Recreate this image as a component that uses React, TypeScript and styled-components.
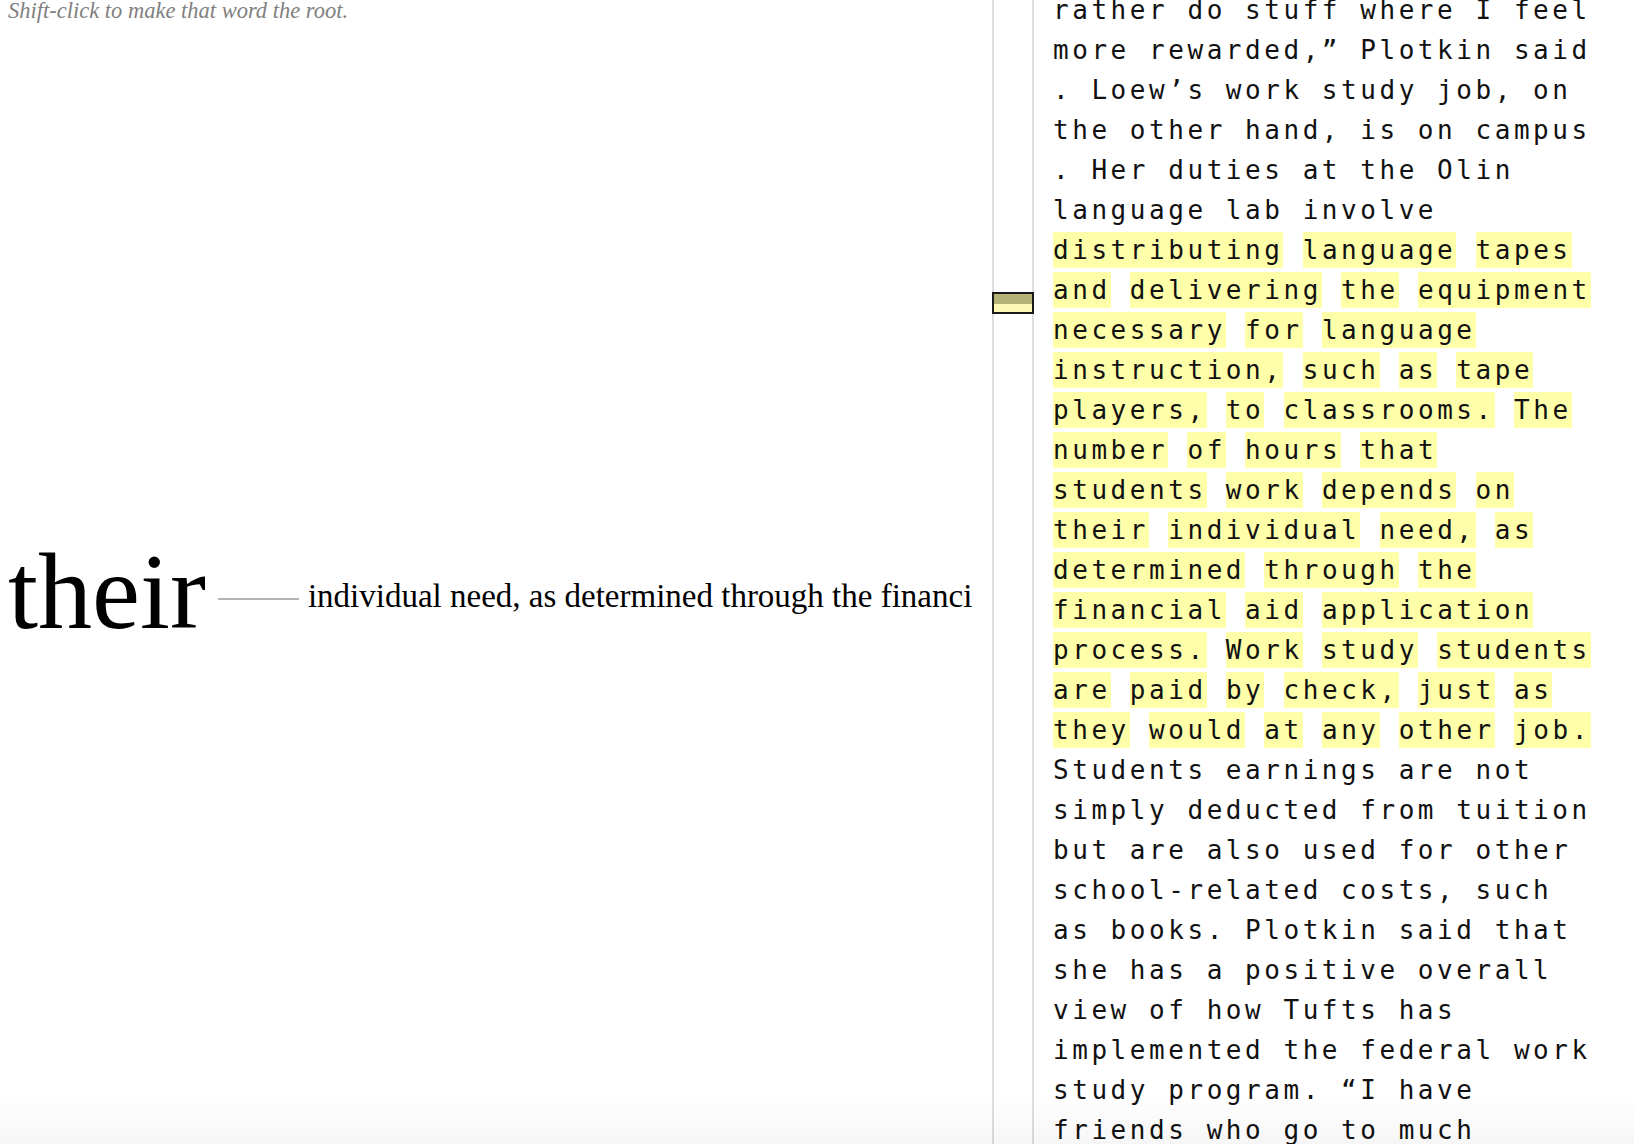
import React from "react";
import styled, { createGlobalStyle } from "styled-components";

const GlobalStyle = createGlobalStyle`
  html, body { margin: 0; padding: 0; background: #ffffff; overflow: hidden; }
  * { box-sizing: border-box; }
`;

const Page = styled.div`
  display: flex;
  height: 100vh;
  width: 100vw;
  overflow: hidden;
`;

const TreePane = styled.section`
  width: 994px;
  flex-shrink: 0;
  display: flex;
  flex-direction: column;
  border-right: 2px solid #dedede;
  padding-left: 8px;
`;

const Hint = styled.p`
  margin: -2px 0 0 0;
  font-family: "Liberation Serif", "Times New Roman", serif;
  font-style: italic;
  font-size: 22.5px;
  line-height: 26px;
  color: #808080;
`;

const TreeArea = styled.div`
  flex: 1;
  display: flex;
  align-items: center;
  padding-top: 15px;
  margin-right: 19px;
  overflow: hidden;
`;

const Branch = styled.div`
  display: flex;
  align-items: center;
  white-space: nowrap;
`;

const RootWord = styled.span`
  font-family: "Liberation Serif", "Times New Roman", serif;
  font-size: 108px;
  line-height: 1;
  color: #000;
  flex-shrink: 0;
`;

const Connector = styled.span`
  width: 81px;
  height: 2px;
  margin: 15px 0 0 12px;
  background: #b3b3b3;
  flex-shrink: 0;
`;

const ChildText = styled.span`
  font-family: "Liberation Serif", "Times New Roman", serif;
  font-size: 33px;
  line-height: 1;
  color: #000;
  margin: 9px 0 0 9px;
  flex-shrink: 0;
`;

const Minimap = styled.aside`
  position: relative;
  width: 40px;
  flex-shrink: 0;
  border-right: 2px solid #dedede;
`;

const ViewportBox = styled.div`
  position: absolute;
  top: 292px;
  left: -2px;
  width: 42px;
  height: 22px;
  border: 2px solid #1a1a1a;
  background: linear-gradient(#b5b278 0, #b5b278 55%, #faf8b4 55%, #faf8b4 100%);
`;

const TextPane = styled.article`
  flex: 1;
  padding-left: 19px;
  overflow: hidden;
`;

const TextBody = styled.div`
  margin-top: -10px;
  font-family: "DejaVu Sans Mono", "Liberation Mono", monospace;
  font-size: 26px;
  letter-spacing: 3.55px;
  line-height: 40px;
  color: #111;
  white-space: pre;
`;

const Line = styled.div`
  height: 40px;
`;

const Mark = styled.span`
  background: #ffffaa;
  padding: 3px 0 3px;
`;

const BottomFade = styled.div`
  position: fixed;
  left: 0;
  right: 0;
  bottom: 0;
  height: 48px;
  pointer-events: none;
  background: linear-gradient(rgba(0, 0, 0, 0), rgba(0, 0, 0, 0.035));
`;

type TextLine = { text: string; hl?: boolean };

const lines: TextLine[] = [
  { text: "rather do stuff where I feel" },
  { text: "more rewarded,\u201d Plotkin said" },
  { text: ". Loew\u2019s work study job, on" },
  { text: "the other hand, is on campus" },
  { text: ". Her duties at the Olin" },
  { text: "language lab involve" },
  { text: "distributing language tapes", hl: true },
  { text: "and delivering the equipment", hl: true },
  { text: "necessary for language", hl: true },
  { text: "instruction, such as tape", hl: true },
  { text: "players, to classrooms. The", hl: true },
  { text: "number of hours that", hl: true },
  { text: "students work depends on", hl: true },
  { text: "their individual need, as", hl: true },
  { text: "determined through the", hl: true },
  { text: "financial aid application", hl: true },
  { text: "process. Work study students", hl: true },
  { text: "are paid by check, just as", hl: true },
  { text: "they would at any other job.", hl: true },
  { text: "Students earnings are not" },
  { text: "simply deducted from tuition" },
  { text: "but are also used for other" },
  { text: "school-related costs, such" },
  { text: "as books. Plotkin said that" },
  { text: "she has a positive overall" },
  { text: "view of how Tufts has" },
  { text: "implemented the federal work" },
  { text: "study program. \u201cI have" },
  { text: "friends who go to much" },
];

function renderLine(line: TextLine) {
  if (!line.hl) return line.text;
  const words = line.text.split(" ");
  return words.map((w, i) => (
    <React.Fragment key={i}>
      {i > 0 ? " " : null}
      <Mark>{w}</Mark>
    </React.Fragment>
  ));
}

export default function App() {
  return (
    <>
      <GlobalStyle />
      <Page>
        <TreePane>
          <Hint>Shift-click to make that word the root.</Hint>
          <TreeArea>
            <Branch>
              <RootWord>their</RootWord>
              <Connector />
              <ChildText>individual need, as determined through the financial aid application process.</ChildText>
            </Branch>
          </TreeArea>
        </TreePane>
        <Minimap>
          <ViewportBox />
        </Minimap>
        <TextPane>
          <TextBody>
            {lines.map((l, i) => (
              <Line key={i}>{renderLine(l)}</Line>
            ))}
          </TextBody>
        </TextPane>
      </Page>
      <BottomFade />
    </>
  );
}
